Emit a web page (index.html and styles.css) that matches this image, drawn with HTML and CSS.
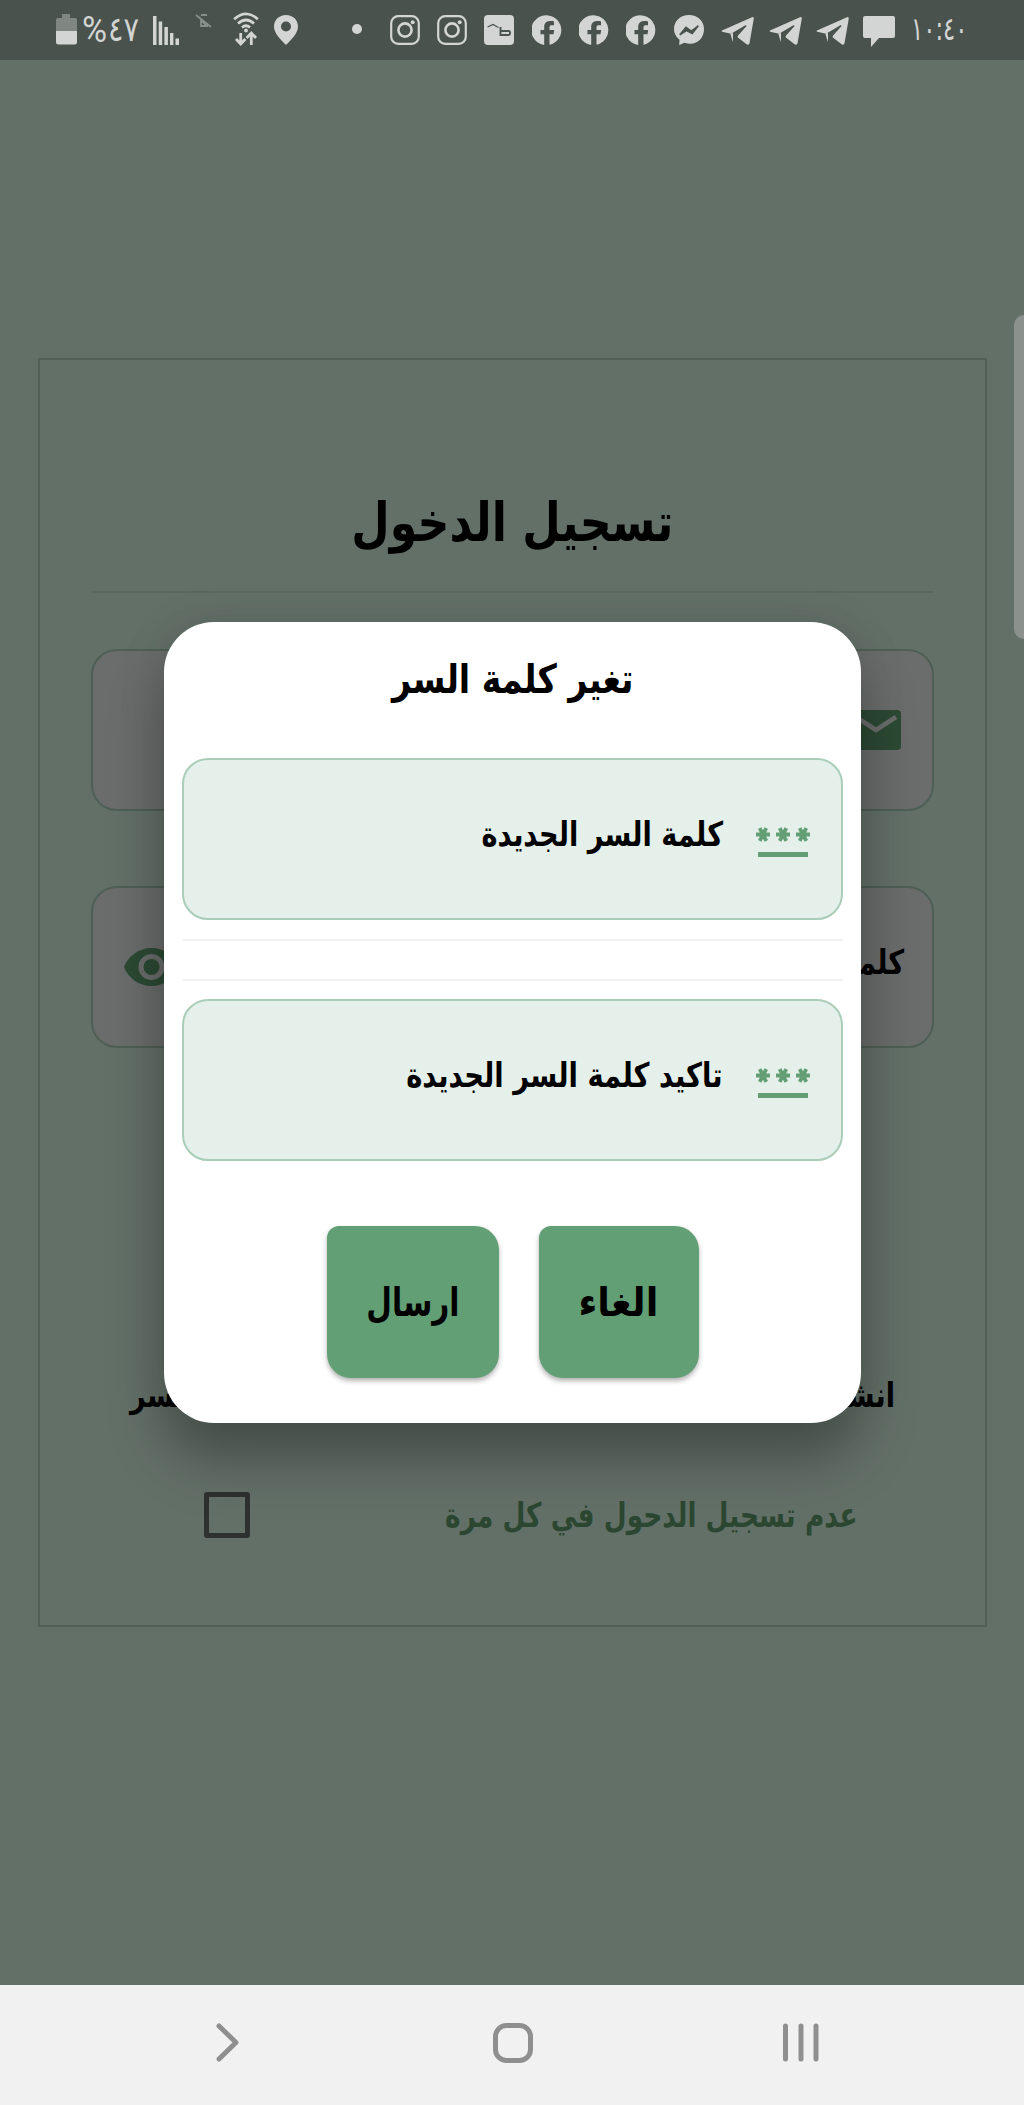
FILE: index.html
```html
<!DOCTYPE html>
<html lang="ar" dir="rtl">
<head>
<meta charset="utf-8">
<title>تسجيل الدخول</title>
<link rel="stylesheet" href="styles.css">
</head>
<body>
<svg width="0" height="0" class="defs">
  <symbol id="insta" viewBox="0 0 30 30"><g fill="none" stroke="currentColor" stroke-width="2.200"><rect x="1.200" y="1.200" width="27.600" height="27.600" rx="7"/><circle cx="15" cy="15" r="6.600" stroke-width="2.600"/></g><circle cx="22.700" cy="7.300" r="2"/></symbol>
  <symbol id="fb" viewBox="0 0 30 30"><path d="M12.2 30A15 15 0 1 1 17.5 29.8V19.3H21.5L22.2 15H17.5V12.3C17.5 10.8 18.5 10.2 19.8 10.2H22V6.4C18 5.7 12.2 5.8 12.2 11.8V15H8.5V19.3H12.2Z"/></symbol>
  <symbol id="tg" viewBox="0 0 33 30"><path d="M1 14.500L31 1.200Q33 .6 32.700 3L28.500 27.300Q28 29.500 26 28.400L17.800 22.300Q15.500 21 17.500 19L25.200 10.600Q26 8.500 24 9.500L10 17.800L1.200 15.800Q-.2 15.200 1 14.500ZM9.500 18L12 17V26Q10.500 22 9.500 18Z" fill-rule="nonzero"/></symbol>
  <symbol id="stars" viewBox="0 0 56 32"><path stroke="currentColor" stroke-width="3.800" d="M1 8.500H15M4.700 2.200L11.300 14.800M11.300 2.200L4.700 14.800M21 8.500H35M24.700 2.200L31.300 14.800M31.300 2.200L24.700 14.800M41 8.500H55M44.700 2.200L51.300 14.800M51.300 2.200L44.700 14.800"/><rect x="3" y="26" width="50" height="5"/></symbol>
</svg>
<div class="phone">
  <header class="status" dir="ltr">
    <svg class="battery" viewBox="0 0 21 31"><path opacity=".4" d="M6 0H14V4H19Q21 4 21 6V18H0V6Q0 4 2 4H6Z"/><path d="M0 17H21V28Q21 30.500 18.500 30.500H2.500Q0 30.500 0 28Z"/></svg>
    <span class="percent"><span class="sign">%</span><bdi class="digits">٤٧</bdi></span>
    <svg class="signal" viewBox="0 0 26 29"><path d="M0 0H3.500V29H0ZM5.700 5.500H9.200V29H5.700ZM11.400 11H14.900V29H11.400ZM17 17H20.400V29H17ZM22.500 22.500H26V29H22.500Z"/></svg>
    <svg class="muted" viewBox="0 0 17 14"><path d="M1 1L16 13M6 1H12M6 5V12H12V9M6 6L12 12" fill="none" stroke="currentColor" stroke-width="1.800"/></svg>
    <svg class="wifi" viewBox="0 0 26 34"><g fill="none" stroke="currentColor"><path stroke-width="2.800" d="M1.200 7.200Q13 -3.500 24.800 7.200M5 11.500Q13 4.500 21 11.500M9 15.500Q13 12 17 15.500"/><path stroke-width="2.800" d="M7.700 21V31M3 27L7.700 32L12.400 27M18.300 33V22M13.600 26L18.300 21L23 26"/></g><circle cx="13" cy="18.500" r="1.900"/></svg>
    <svg class="pin" viewBox="0 0 24 30"><path fill-rule="evenodd" d="M12 0C5 0 0 5 0 11.500C0 18 6 24 12 30C18 24 24 18 24 11.500C24 5 19 0 12 0ZM12 6.500A5 5 0 1 1 12 16.500A5 5 0 1 1 12 6.500Z"/></svg>
    <span class="dot"></span>
    <svg class="app"><use href="#insta"/></svg>
    <svg class="app"><use href="#insta"/></svg>
    <svg class="app" viewBox="0 0 30 30"><rect width="30" height="30" rx="4"/><path class="cut" d="M3.500 12L9 9.500L14.500 12.500" stroke-width="1.200"/><path class="cut" d="M16.500 12V20H24.500Q26 20 26 18.500V17Q26 16 24.500 16H16.500" stroke-width="1.900"/></svg>
    <svg class="app"><use href="#fb"/></svg>
    <svg class="app"><use href="#fb"/></svg>
    <svg class="app"><use href="#fb"/></svg>
    <svg class="app" viewBox="0 0 30 30"><path d="M15 0C6.500 0 0 6 0 14C0 18.500 2 22 5.500 24.800L5.200 30L10.500 27.800C22 31.500 30 24 30 14C30 6 23.500 0 15 0Z"/><path d="M5.800 19.800L12 12.200L17.300 16L24.300 10.800L18.200 18.500L12.500 15.500Z" fill="#4a524d" stroke="#4a524d" stroke-width="1.500"/></svg>
    <svg class="tg"><use href="#tg"/></svg>
    <svg class="tg"><use href="#tg"/></svg>
    <svg class="tg"><use href="#tg"/></svg>
    <svg class="chat" viewBox="0 0 32 31"><path d="M2 0H30Q32 0 32 2V20Q32 22 30 22H16L8 31V22H2Q0 22 0 20V2Q0 0 2 0Z"/></svg>
    <bdi class="clock">١٠:٤٠</bdi>
  </header>
  <main class="page">
    <section class="login">
      <h1><span class="t t-login">تسجيل الدخول</span></h1>
      <div class="field">
        <svg class="mail" viewBox="0 0 50 40"><rect width="50" height="40" rx="4"/><path d="M5 7L25 20L45 7" fill="none" stroke="#6b6d6c" stroke-width="4.500"/></svg>
      </div>
      <div class="field second">
        <span class="t t-pass">كلمة السر</span>
        <svg class="eye" viewBox="0 0 55 38"><path fill-rule="evenodd" d="M27.500 0C15 0 4 8 0 19C4 30 15 38 27.500 38S51 30 55 19C51 8 40 0 27.500 0ZM27.500 6A13 13 0 1 1 27.500 32A13 13 0 1 1 27.500 6Z"/><circle cx="27.500" cy="19" r="8"/></svg>
      </div>
      <div class="links"><span class="t t-new">انشاء حساب</span><span class="t t-forgot">نسيت كلمة السر</span></div>
      <div class="remember"><span class="t t-remember">عدم تسجيل الدحول في كل مرة</span><span class="box"></span></div>
    </section>
  </main>
  <nav class="nav" dir="ltr">
    <svg viewBox="0 0 24 40"><path d="M3 3L20 19.500L3 36"/></svg>
    <svg class="home" viewBox="0 0 40 40"><rect x="2.500" y="2.500" width="35" height="35" rx="11"/></svg>
    <svg class="recent" viewBox="0 0 36 40"><path d="M2.500 3V36M18 3V36M33 3V36"/></svg>
  </nav>
  <div class="thumb"></div>
  <div class="dialog">
    <h2><span class="t t-change">تغير كلمة السر</span></h2>
    <div class="input"><svg class="stars"><use href="#stars"/></svg><span class="t t-newpass">كلمة السر الجديدة</span></div>
    <div class="gap"></div>
    <div class="input"><svg class="stars"><use href="#stars"/></svg><span class="t t-confirm">تاكيد كلمة السر الجديدة</span></div>
    <div class="actions">
      <button class="cancel"><span class="t t-cancel">الغاء</span></button>
      <button class="send"><span class="t t-send">ارسال</span></button>
    </div>
  </div>
</div>
</body>
</html>
```
FILE: styles.css
```css
* { box-sizing: border-box; }
body { margin: 0; font-family: "DejaVu Sans", sans-serif; color: #000; }
svg { display: block; flex: none; fill: currentColor; }
.defs { position: absolute; }
.phone { position: relative; display: flex; flex-direction: column; width: 1024px; height: 2105px; overflow: hidden; background: #637068; }
.t { display: block; flex: none; white-space: nowrap; line-height: 40px; font-size: 34px; font-weight: 700; transform: scaleX(.8); transform-origin: right center; }

.status { display: flex; align-items: flex-start; height: 60px; background: #4a524d; color: #d2d5d3; }
.status > * { flex: none; }
.battery { width: 21px; height: 31px; margin: 14px 5px 0 56px; }
.percent { display: flex; width: 60px; margin-right: 11px; line-height: 60px; }
.sign { display: block; font-family: Roboto, sans-serif; font-size: 36px; width: 28px; transform: scaleX(.95); transform-origin: left; }
.digits { display: block; font-size: 34px; line-height: 58px; transform: scaleX(.85); transform-origin: left; }
.signal { width: 26px; height: 29px; margin: 16px 16px 0 0; }
.muted { width: 17px; height: 14px; margin: 14px 21px 0 0; color: #88908b; }
.wifi { width: 26px; height: 34px; margin: 12px 15px 0 0; }
.pin { width: 24px; height: 30px; margin: 15px 54px 0 0; }
.dot { width: 10px; height: 10px; margin: 24px 27.500px 0 0; border-radius: 50%; background: currentColor; }
.app { width: 30px; height: 30px; margin: 15px 17.400px 0 0; }
.cut { fill: none; stroke: #4a524d; }
.tg { width: 33px; height: 30px; margin: 16px 14.400px 0 0; }
.chat { width: 32px; height: 31px; margin: 16px 16px 0 0; }
.clock { font-size: 32px; line-height: 58px; transform: scaleX(.71); transform-origin: left; }

.page { height: 1925px; padding: 298px 37px 0 38px; }
.login { height: 1269px; padding: 112px 51px 0; border: 2px solid #516057; }
h1 { display: flex; justify-content: center; height: 121px; margin: 0; padding-top: 31px; border-bottom: 2px solid #5b685f; }
.field { display: flex; align-items: center; justify-content: space-between; height: 162px; margin-top: 56px; padding: 0 31px; border: 2px solid #4e5f55; border-radius: 26px; background: #6b6d6c; }
.second { margin-top: 75px; padding-right: 28px; }
.mail { width: 50px; height: 40px; color: #2c4a34; }
.eye { width: 55px; height: 38px; color: #2c4a34; }
.links { display: flex; justify-content: space-between; margin-top: 327px; padding: 0 39px; }
.remember { display: flex; justify-content: space-between; align-items: center; margin-top: 77px; padding: 0 77px 0 113px; color: #2c4731; }
.box { width: 46px; height: 46px; border: 5px solid #2e312f; border-radius: 3px; }

.nav { display: flex; justify-content: space-between; align-items: center; height: 120px; padding: 0 205px 5px 216px; background: #f1f1f1; color: #8f8f8f; }
.nav svg { width: 24px; height: 40px; fill: none; stroke: currentColor; stroke-width: 5; stroke-linecap: round; stroke-linejoin: round; }
.nav .home { width: 40px; margin-left: 2px; }
.nav .recent { width: 36px; }

.thumb { position: absolute; right: 0; top: 315px; width: 10px; height: 324px; border-radius: 10px 0 0 10px; background: #8b928e; }

.dialog { position: absolute; left: 164px; top: 622px; width: 697px; height: 801px; padding: 0 18px; border-radius: 50px; background: #fff; box-shadow: 0 38px 56px rgba(0,0,0,.27), 0 4px 50px rgba(0,0,0,.1); }
h2 { display: flex; justify-content: center; height: 136px; margin: 0; padding-top: 37px; }
.input { display: flex; height: 162px; padding: 68px 30px 0; gap: 32px; border: 2px solid #aacdb9; border-radius: 26px; background: #e5f0ea; }
.input .t { margin-top: -14px; }
.stars { width: 56px; height: 32px; margin-top: -2px; color: #639e74; }
.gap { height: 42px; margin: 19px 0 18px; border: solid #f0f1f0; border-width: 2px 0; }
.actions { display: flex; justify-content: center; gap: 40px; margin-top: 65px; }
.actions button { display: flex; align-items: center; justify-content: center; height: 152px; padding: 0; border: 0; border-radius: 12px 24px 24px 24px; background: #639f75; box-shadow: 0 3px 5px rgba(0,0,0,.3); font-family: inherit; color: #000; }
.cancel { width: 160px; }
.send { width: 172px; }

.t-login, .t-change, .t-cancel, .t-send { transform-origin: center; }
.t-login { font-size: 54px; transform: scaleX(.82); }
.t-change { font-size: 40px; transform: scaleX(.828); }
.t-cancel { font-size: 40px; transform: scaleX(.92); }
.t-send { font-size: 40px; transform: scaleX(.74); }
.t-pass { position: relative; top: -5px; }
.t-confirm { transform: scaleX(.806); }
.t-remember { transform: scaleX(.776); }
.t-forgot { transform-origin: left center; }
```
